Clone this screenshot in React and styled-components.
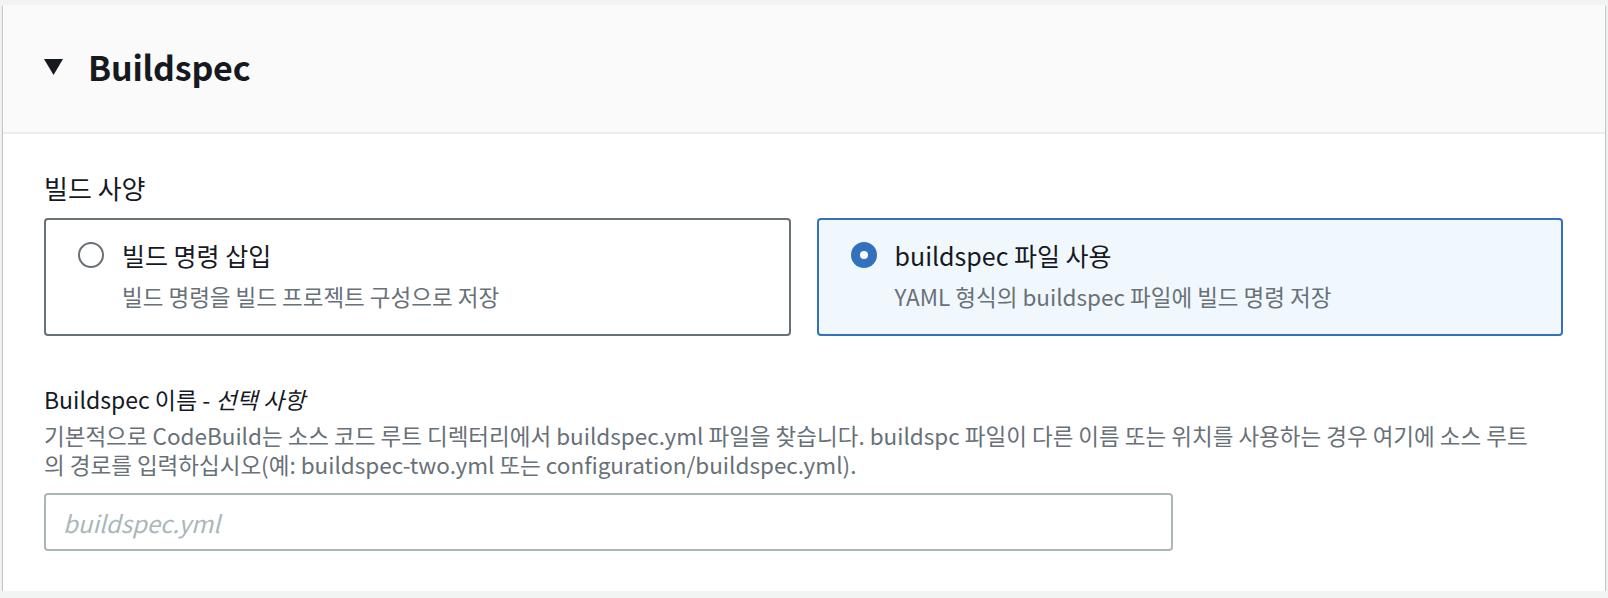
import React, { useState } from "react";
import styled, { createGlobalStyle } from "styled-components";

const GlobalStyle = createGlobalStyle`
  html, body {
    margin: 0;
    background: #f2f3f3;
  }
  body {
    font-family: "Noto Sans CJK KR", "Noto Sans", sans-serif;
    color: #16191f;
  }
`;

const Card = styled.section`
  margin: 5px 3px 0;
  background: #ffffff;
  box-shadow: 0 1px 1px 0 rgba(0, 28, 36, 0.3),
    1px 1px 1px 0 rgba(0, 28, 36, 0.15),
    -1px 1px 1px 0 rgba(0, 28, 36, 0.15);
`;

const Header = styled.header`
  height: 129px;
  box-sizing: border-box;
  background: #fafafa;
  border-bottom: 2px solid #eaeded;
  display: flex;
  align-items: center;
  gap: 25px;
  padding: 0 0 4px 41px;
  cursor: pointer;
  h2 {
    margin: 0;
    font-size: 34px;
    font-weight: 700;
    letter-spacing: -0.2px;
    line-height: 44px;
    color: #16191f;
  }
`;

const Body = styled.div`
  padding: 38px 42px 40px 41px;
`;

const FieldLabel = styled.div`
  font-size: ${(p) => p.$size || 23}px;
  line-height: 32px;
  color: #16191f;
  margin-top: ${(p) => p.$top || 0}px;
  em {
    font-style: italic;
  }
`;

const Tiles = styled.div`
  display: grid;
  grid-template-columns: 1fr 1fr;
  gap: 26px;
  margin-top: 14px;
`;

const Tile = styled.label`
  height: 118px;
  box-sizing: border-box;
  border: 2px solid ${(p) => (p.$checked ? "#3171bd" : "#687078")};
  background: ${(p) => (p.$checked ? "#f1f8fd" : "#ffffff")};
  border-radius: 4px;
  padding: 19px 20px 0 32px;
  display: grid;
  grid-template-columns: 26px 1fr;
  column-gap: 18px;
  align-items: center;
  align-content: start;
  cursor: pointer;
`;

const Radio = styled.span`
  width: 26px;
  height: 26px;
  box-sizing: border-box;
  border-radius: 50%;
  background: #fff;
  border: ${(p) => (p.$checked ? "9px solid #3171bd" : "2px solid #687078")};
`;

const TileTitle = styled.span`
  font-size: 25px;
  line-height: 32px;
  color: #16191f;
`;

const TileDesc = styled.span`
  grid-column: 2;
  font-size: 22.5px;
  line-height: 30px;
  margin-top: 10px;
  color: #687078;
`;

const Hint = styled.p`
  margin: 6px 0 0;
  max-width: 1492px;
  font-size: 22.5px;
  line-height: 29px;
  color: #687078;
`;

const Input = styled.input`
  display: block;
  margin-top: 14px;
  width: 1129px;
  height: 58px;
  box-sizing: border-box;
  border: 2px solid #aab7b8;
  border-radius: 4px;
  padding: 0 17px;
  font-family: inherit;
  font-size: 24px;
  color: #16191f;
  outline: none;
  &::placeholder {
    color: #aab7b8;
    font-style: italic;
  }
`;

const options = [
  { id: "insert", title: "빌드 명령 삽입", desc: "빌드 명령을 빌드 프로젝트 구성으로 저장" },
  { id: "file", title: "buildspec 파일 사용", desc: "YAML 형식의 buildspec 파일에 빌드 명령 저장" },
];

export default function App() {
  const [mode, setMode] = useState("file");
  const [name, setName] = useState("");

  return (
    <>
      <GlobalStyle />
      <Card>
        <Header>
          <svg width="19" height="16" viewBox="0 0 19 16">
            <polygon points="0,0 19,0 9.5,16" fill="#16191f" />
          </svg>
          <h2>Buildspec</h2>
        </Header>
        <Body>
          <FieldLabel $size={26}>빌드 사양</FieldLabel>
          <Tiles>
            {options.map((o) => (
              <Tile key={o.id} $checked={mode === o.id} onClick={() => setMode(o.id)}>
                <Radio $checked={mode === o.id} />
                <TileTitle>{o.title}</TileTitle>
                <TileDesc>{o.desc}</TileDesc>
              </Tile>
            ))}
          </Tiles>
          <FieldLabel $top={47}>
            Buildspec 이름 - <em>선택 사항</em>
          </FieldLabel>
          <Hint>
            기본적으로 CodeBuild는 소스 코드 루트 디렉터리에서 buildspec.yml 파일을 찾습니다. buildspc 파일이 다른 이름 또는 위치를 사용하는 경우 여기에 소스 루트의 경로를 입력하십시오(예: buildspec-two.yml 또는 configuration/buildspec.yml).
          </Hint>
          <Input
            placeholder="buildspec.yml"
            value={name}
            onChange={(e) => setName(e.target.value)}
          />
        </Body>
      </Card>
    </>
  );
}
